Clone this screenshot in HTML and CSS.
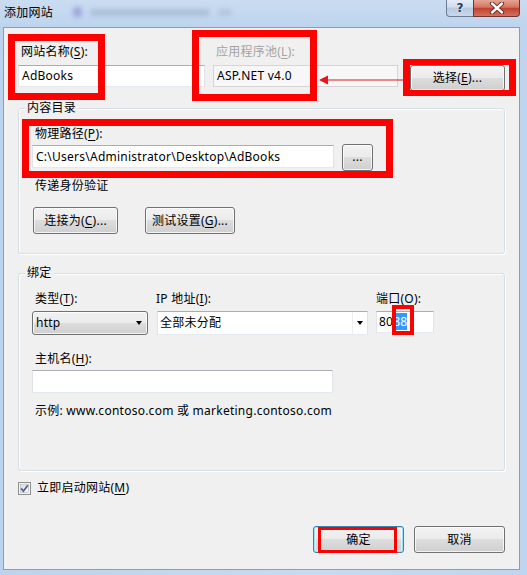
FILE: index.html
```html
<!DOCTYPE html>
<html lang="zh-CN">
<head>
<meta charset="utf-8">
<title>添加网站</title>
<link rel="stylesheet" href="styles.css">
</head>
<body>
<div class="titlebar">
  <div class="title">添加网站</div>
  <div class="ghost"><span class="ghost-icon"></span><span class="ghost-text"></span><span class="ghost-text short"></span></div>
  <div class="caps">
    <div class="cap cap-help">?</div>
    <div class="cap cap-close">
      <svg width="18" height="12" viewBox="0 0 18 12"><path d="M4 1.5 L14 10.5 M14 1.5 L4 10.5" stroke="#5a1f1a" stroke-width="4.2" stroke-linecap="round"/><path d="M4 1.5 L14 10.5 M14 1.5 L4 10.5" stroke="#fff" stroke-width="2.4" stroke-linecap="round"/></svg>
    </div>
  </div>
</div>
<div class="client">
  <div class="toprow">
    <div class="field f-name">
      <div class="lbl">网站名称(<u>S</u>):</div>
      <div class="tb">AdBooks</div>
    </div>
    <div class="field f-pool">
      <div class="lbl dis">应用程序池(<u>L</u>):</div>
      <div class="tb dis">ASP.NET v4.0</div>
    </div>
    <div class="btn btn-select">选择(<u>E</u>)...</div>
  </div>

  <div class="group g-content">
    <div class="legend">内容目录</div>
    <div class="lbl mt10">物理路径(<u>P</u>):</div>
    <div class="pathrow">
      <div class="tb path">C:\Users\Administrator\Desktop\AdBooks</div>
      <div class="btn btn-dots">...</div>
    </div>
    <div class="lbl mt7">传递身份验证</div>
    <div class="btnrow">
      <div class="btn btn-conn">连接为(<u>C</u>)...</div>
      <div class="btn btn-test">测试设置(<u>G</u>)...</div>
    </div>
  </div>

  <div class="group g-bind">
    <div class="legend">绑定</div>
    <div class="bindgrid">
      <div class="lbl">类型(<u>T</u>):</div>
      <div class="lbl lbl-flush">IP 地址(<u>I</u>):</div>
      <div class="lbl lbl-flush">端口(<u>O</u>):</div>
      <div class="combo-btn">http<span class="caret"></span></div>
      <div class="combo-edit"><span class="combo-val">全部未分配</span><span class="combo-drop"><span class="caret"></span></span></div>
      <div class="tb port">80<span class="sel">88</span></div>
    </div>
    <div class="lbl mt16">主机名(<u>H</u>):</div>
    <div class="tb host"></div>
    <div class="lbl mt10">示例: www.contoso.com 或 marketing.contoso.com</div>
  </div>

  <div class="checkrow">
    <svg class="chk" width="13" height="13" viewBox="0 0 13 13">
      <defs><linearGradient id="cg" x1="0" y1="0" x2="1" y2="1"><stop offset="0" stop-color="#dcdcdc"/><stop offset="1" stop-color="#fbfbfb"/></linearGradient></defs>
      <rect x="0.5" y="0.5" width="12" height="12" fill="#f4f4f4" stroke="#8e8f8f"/>
      <rect x="2.5" y="2.5" width="8" height="8" fill="url(#cg)" stroke="#b6b6b6" stroke-width="0.6"/>
      <path d="M3.2 6.4 L5.4 9.2 L9.8 3.2" fill="none" stroke="#4a5f97" stroke-width="1.7"/>
    </svg>
    <span>立即启动网站(<u>M</u>)</span>
  </div>

  <div class="footer">
    <div class="btn btn-ok">确定</div>
    <div class="btn btn-cancel">取消</div>
  </div>
</div>

<div class="mark m1"></div>
<div class="mark m2"></div>
<div class="mark m3"></div>
<div class="mark m4"></div>
<div class="mark m5"></div>
<div class="mark m6"></div>
<svg class="arrow" width="86" height="12" viewBox="0 0 86 12"><path d="M9 6 H86" stroke="#e8141c" stroke-width="1.2"/><path d="M1 6 L10 1.5 L10 10.5 Z" fill="#e8141c"/></svg>
</body>
</html>
```
FILE: styles.css
```css
* { box-sizing: border-box; }

body {
  margin: 0;
  width: 527px;
  height: 575px;
  overflow: hidden;
  position: relative;
  background: linear-gradient(90deg, #bcd3ee 0%, #c6daf1 60%, #bfd5ef 100%);
  font-family: "Noto Sans", "Noto Sans CJK SC", sans-serif;
  font-size: 12px;
  line-height: 16px;
  letter-spacing: 0.25px;
  color: #000;
}

u { text-decoration-thickness: 1px; text-underline-offset: 2px; }

/* title bar */
.titlebar {
  height: 27px;
  display: flex;
  align-items: flex-start;
  background: linear-gradient(180deg, #cadcf1 0%, #bed4ee 100%);
}
.title { margin: 5px 0 0 4px; white-space: nowrap; }
.ghost {
  display: flex;
  align-items: center;
  gap: 8px;
  margin: 7px 0 0 20px;
  filter: blur(2.5px);
  opacity: 0.6;
}
.ghost-icon { width: 9px; height: 10px; background: #8a86c9; border-radius: 2px; }
.ghost-text { width: 120px; height: 7px; background: #9aaec6; border-radius: 3px; }
.ghost-text.short { width: 14px; background: #a6b9d0; }
.caps { margin-left: auto; margin-right: 7px; display: flex; }
.cap { height: 17px; display: flex; align-items: center; justify-content: center; }
.cap-help {
  width: 27px;
  border: 1px solid #6c7d93;
  border-top: none;
  border-right: none;
  border-radius: 0 0 0 4px;
  background: linear-gradient(180deg, #e3ecf7 0%, #cfdcec 45%, #b7c9df 50%, #c9d9ec 100%);
  color: #2b3a4e;
  font-family: "DejaVu Sans", sans-serif;
  font-weight: bold;
  font-size: 12px;
  letter-spacing: 0;
  text-shadow: 0 0 2px #fff;
}
.cap-close {
  width: 47px;
  border: 1px solid #6e3531;
  border-top: none;
  border-radius: 0 0 4px 0;
  background: linear-gradient(180deg, #e7a593 0%, #d57562 45%, #c2412f 52%, #d3705f 100%);
}

/* client area */
.client {
  margin-left: 3px;
  width: 517px;
  height: 543px;
  background: #f0f0f0;
  border: 1px solid #8c9cb1;
  padding: 16px 14px 0 14px;
}

.toprow { display: flex; align-items: flex-start; }
.field { display: flex; flex-direction: column; gap: 5px; }
.f-name { width: 187px; }
.f-pool { width: 185px; margin-left: 8px; }

.lbl { padding-left: 3px; height: 16px; white-space: nowrap; }
.lbl.dis { color: #a3a3a3; }
.lbl-flush { padding-left: 0; }
.mt7 { margin-top: 7px; }
.mt10 { margin-top: 10px; }
.mt16 { margin-top: 16px; }

.tb {
  height: 22px;
  background: #fff;
  border: 1px solid;
  border-color: #abadb3 #e2e3ea #e3e9ef #e2e3ea;
  padding: 0 3px;
  line-height: 20px;
  white-space: nowrap;
  overflow: hidden;
}
.tb.dis { background: #f7f7f7; border-color: #d5d5d5; }

.btn {
  height: 27px;
  border: 1px solid #707070;
  border-radius: 3px;
  background: linear-gradient(180deg, #f2f2f2 0%, #ebebeb 49%, #dddddd 50%, #cfcfcf 100%);
  box-shadow: inset 0 0 0 1px rgba(255, 255, 255, 0.75);
  display: flex;
  align-items: center;
  justify-content: center;
  white-space: nowrap;
}
.btn-select { width: 95px; height: 26px; margin: 21px 0 0 12px; }

/* group boxes */
.group {
  margin-top: 17px;
  border: 1px solid #d5dfe5;
  border-radius: 3px;
  box-shadow: inset 1px 1px 0 #fff, 1px 1px 0 #fff;
  padding: 0 13px;
}
.legend {
  width: fit-content;
  margin: -9px 0 0 -7px;
  padding: 0 2px;
  background: #f0f0f0;
  height: 16px;
  white-space: nowrap;
}
.g-content { padding-bottom: 19px; }
.pathrow { display: flex; align-items: flex-start; margin-top: 2px; height: 27px; }
.tb.path { width: 302px; height: 23px; margin-top: 1px; line-height: 21px; }
.btn-dots { width: 31px; margin-left: 8px; line-height: 10px; align-items: flex-end; padding-bottom: 8px; }
.btnrow { display: flex; margin-top: 13px; }
.btn-conn { width: 85px; margin-left: 1px; }
.btn-test { width: 90px; margin-left: 27px; }

.g-bind { margin-top: 19px; padding-bottom: 51px; }
.bindgrid {
  display: grid;
  grid-template-columns: 124px 220px 1fr;
  row-gap: 4px;
  margin-top: 10px;
  align-items: start;
}
.combo-btn {
  width: 116px;
  height: 24px;
  border: 1px solid #707070;
  border-radius: 3px;
  background: linear-gradient(180deg, #f2f2f2 0%, #ebebeb 49%, #dddddd 50%, #cfcfcf 100%);
  box-shadow: inset 0 0 0 1px rgba(255, 255, 255, 0.75);
  display: flex;
  align-items: center;
  justify-content: space-between;
  padding: 0 5px 0 3px;
}
.caret {
  width: 0;
  height: 0;
  border-left: 3.5px solid transparent;
  border-right: 3.5px solid transparent;
  border-top: 4px solid #000;
}
.combo-edit {
  width: 211px;
  height: 24px;
  margin-left: 1px;
  background: #fff;
  border: 1px solid;
  border-color: #abadb3 #e2e3ea #e3e9ef #e2e3ea;
  display: flex;
  align-items: stretch;
}
.combo-val { flex: 1; padding-left: 2px; line-height: 22px; }
.combo-drop {
  width: 15px;
  border-left: 1px solid #eceef1;
  display: flex;
  align-items: center;
  justify-content: center;
}
.tb.port { width: 58px; padding: 0 2px; }
.sel { background: #3399ff; color: #fff; }
.tb.host { width: 301px; height: 23px; margin-top: 3px; }

.checkrow { display: flex; align-items: center; gap: 6px; margin-top: 9px; height: 16px; }
.chk { display: block; }

.footer { display: flex; justify-content: flex-end; gap: 10px; margin-top: 30px; }
.btn-ok, .btn-cancel { width: 91px; }
.btn-ok {
  border-color: #3c7fb1;
  box-shadow: inset 0 0 0 1px #9ee1f9, inset 0 0 0 2px rgba(255, 255, 255, 0.5);
}

/* red annotation overlays */
.mark { position: absolute; border: 7px solid #ff0000; }
.m1 { left: 8px; top: 34px; width: 97px; height: 66px; }
.m2 { left: 192px; top: 30px; width: 125px; height: 71px; }
.m3 { left: 403px; top: 59px; width: 113px; height: 37px; border-width: 6px 7px; }
.m4 { left: 22px; top: 119px; width: 371px; height: 59px; }
.m5 { left: 392px; top: 305px; width: 22px; height: 30px; border-width: 4px; }
.m6 { left: 318px; top: 527px; width: 79px; height: 26px; border-width: 3px; }
.arrow { position: absolute; left: 318px; top: 74px; }
```
